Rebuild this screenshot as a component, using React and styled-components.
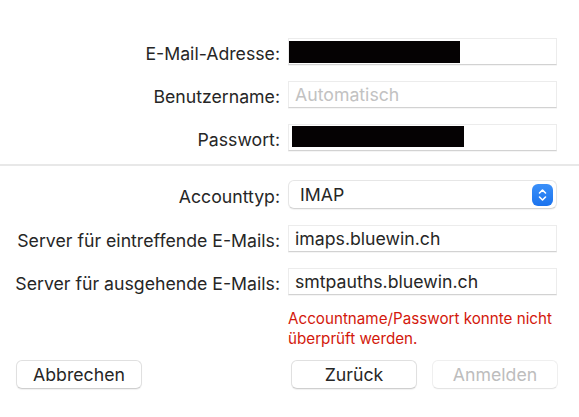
import React from "react";
import styled, { createGlobalStyle } from "styled-components";

const GlobalStyle = createGlobalStyle`
  html, body {
    margin: 0;
    padding: 0;
    background: #ffffff;
  }
  body {
    font-family: Inter, "Noto Sans", "Liberation Sans", sans-serif;
    color: #262626;
    -webkit-font-smoothing: antialiased;
  }
`;

const Window = styled.div`
  width: 579px;
  height: 417px;
  box-sizing: border-box;
  padding: 38px 22px 0 0;
  background: #ffffff;
  display: flex;
  flex-direction: column;
`;

const Form = styled.div`
  display: grid;
  grid-template-columns: 280px 269px;
  column-gap: 8px;
  row-gap: ${(p) => p.$gap || 16}px;
  align-items: center;
`;

const Label = styled.div`
  text-align: right;
  font-size: 17.7px;
  line-height: 22px;
  padding-top: 5px;
  color: #262626;
  white-space: nowrap;
`;

const Field = styled.div`
  position: relative;
  height: 27px;
  box-sizing: border-box;
  background: #ffffff;
  border: 1px solid #ececec;
  border-bottom-color: #d2d2d2;
  box-shadow: 0 1px 0 rgba(0, 0, 0, 0.04);
  padding: 0 6px;
  display: flex;
  align-items: center;
  font-size: 17.7px;
  color: ${(p) => (p.$placeholder ? "#c2c2c2" : "#262626")};
  white-space: nowrap;
  overflow: hidden;
`;

const Redaction = styled.div`
  position: absolute;
  background: #050203;
`;

const Separator = styled.div`
  height: 2px;
  background: #e8e8e8;
  margin: 13px -22px 14px 0;
`;

const Popup = styled.div`
  height: 29px;
  box-sizing: border-box;
  border-radius: 6px;
  background: #ffffff;
  border: 1px solid #e6e6e6;
  border-bottom-color: #d4d4d4;
  box-shadow: 0 1px 1px rgba(0, 0, 0, 0.05);
  display: flex;
  align-items: center;
  justify-content: space-between;
  padding: 0 3px 0 11px;
  font-size: 17.7px;
  color: #262626;
`;

const Stepper = styled.div`
  width: 21px;
  height: 22px;
  border-radius: 6px;
  background: linear-gradient(#3b90f9, #1b73ee);
  display: flex;
  align-items: center;
  justify-content: center;
`;

const ErrorText = styled.div`
  margin: 14px 0 0 288px;
  font-size: 15.2px;
  line-height: 20px;
  color: #d3180b;
  width: 269px;
`;

const Footer = styled.div`
  display: flex;
  justify-content: space-between;
  align-items: center;
  margin-top: 11px;
  padding-left: 16px;
`;

const ButtonGroup = styled.div`
  display: flex;
  gap: 15px;
  margin-right: -1px;
`;

const Button = styled.div`
  width: 126px;
  height: 29px;
  box-sizing: border-box;
  border-radius: 6px;
  background: #ffffff;
  border: 1px solid ${(p) => (p.$disabled ? "#efefef" : "#e0e0e0")};
  border-bottom-color: ${(p) => (p.$disabled ? "#e4e4e4" : "#cfcfcf")};
  box-shadow: 0 1px 1px rgba(0, 0, 0, ${(p) => (p.$disabled ? 0.02 : 0.06)});
  display: flex;
  align-items: center;
  justify-content: center;
  font-size: 17.7px;
  color: ${(p) => (p.$disabled ? "#bdbdbd" : "#262626")};
`;

function StepperIcon() {
  return (
    <svg width="11" height="16" viewBox="0 0 11 16" fill="none">
      <path d="M2.5 6 L5.5 3 L8.5 6" stroke="#fff" strokeWidth="1.6" strokeLinecap="round" strokeLinejoin="round" />
      <path d="M2.5 10 L5.5 13 L8.5 10" stroke="#fff" strokeWidth="1.6" strokeLinecap="round" strokeLinejoin="round" />
    </svg>
  );
}

export default function App() {
  return (
    <>
      <GlobalStyle />
      <Window>
        <Form>
          <Label>E-Mail-Adresse:</Label>
          <Field>
            <Redaction style={{ left: 0, top: 2, width: 171, height: 22 }} />
          </Field>
          <Label>Benutzername:</Label>
          <Field $placeholder>Automatisch</Field>
          <Label>Passwort:</Label>
          <Field>
            <Redaction style={{ left: 3, top: 1, width: 172, height: 21 }} />
          </Field>
        </Form>
        <Separator />
        <Form $gap={16}>
          <Label>Accounttyp:</Label>
          <Popup>
            IMAP
            <Stepper>
              <StepperIcon />
            </Stepper>
          </Popup>
          <Label>Server für eintreffende E-Mails:</Label>
          <Field>imaps.bluewin.ch</Field>
          <Label>Server für ausgehende E-Mails:</Label>
          <Field>smtpauths.bluewin.ch</Field>
        </Form>
        <ErrorText>Accountname/Passwort konnte nicht überprüft werden.</ErrorText>
        <Footer>
          <Button>Abbrechen</Button>
          <ButtonGroup>
            <Button>Zurück</Button>
            <Button $disabled>Anmelden</Button>
          </ButtonGroup>
        </Footer>
      </Window>
    </>
  );
}
